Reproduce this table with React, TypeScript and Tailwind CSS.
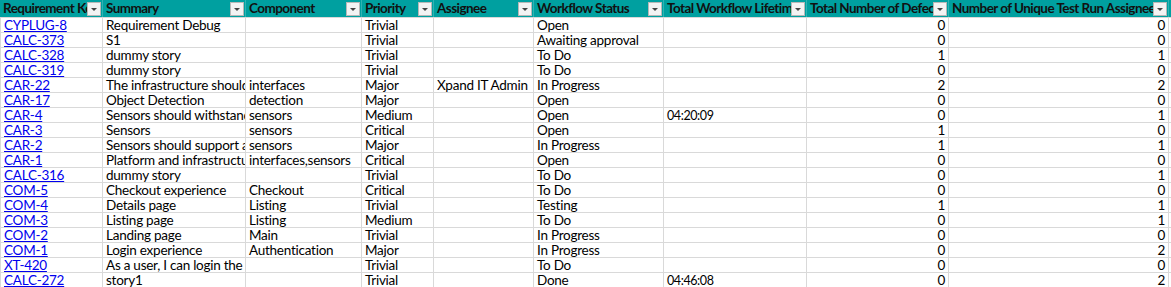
const columns = [
  { name: "Requirement Key", w: 103 },
  { name: "Summary", w: 143 },
  { name: "Component", w: 116 },
  { name: "Priority", w: 72 },
  { name: "Assignee", w: 100 },
  { name: "Workflow Status", w: 130 },
  { name: "Total Workflow Lifetime", w: 143 },
  { name: "Total Number of Defects", w: 142 },
  { name: "Number of Unique Test Run Assignees", w: 220 },
  { name: "Total", w: 60 },
];

const rows: string[][] = [
  ["CYPLUG-8", "Requirement Debug", "", "Trivial", "", "Open", "", "0", "0"],
  ["CALC-373", "S1", "", "Trivial", "", "Awaiting approval", "", "0", "0"],
  ["CALC-328", "dummy story", "", "Trivial", "", "To Do", "", "1", "1"],
  ["CALC-319", "dummy story", "", "Trivial", "", "To Do", "", "0", "0"],
  ["CAR-22", "The infrastructure should support", "interfaces", "Major", "Xpand IT Admin", "In Progress", "", "2", "2"],
  ["CAR-17", "Object Detection", "detection", "Major", "", "Open", "", "0", "0"],
  ["CAR-4", "Sensors should withstand", "sensors", "Medium", "", "Open", "04:20:09", "0", "1"],
  ["CAR-3", "Sensors", "sensors", "Critical", "", "Open", "", "1", "0"],
  ["CAR-2", "Sensors should support a", "sensors", "Major", "", "In Progress", "", "1", "1"],
  ["CAR-1", "Platform and infrastructure", "interfaces,sensors", "Critical", "", "Open", "", "0", "0"],
  ["CALC-316", "dummy story", "", "Trivial", "", "To Do", "", "0", "1"],
  ["COM-5", "Checkout experience", "Checkout", "Critical", "", "To Do", "", "0", "0"],
  ["COM-4", "Details page", "Listing", "Trivial", "", "Testing", "", "1", "1"],
  ["COM-3", "Listing page", "Listing", "Medium", "", "To Do", "", "0", "1"],
  ["COM-2", "Landing page", "Main", "Trivial", "", "In Progress", "", "0", "0"],
  ["COM-1", "Login experience", "Authentication", "Major", "", "In Progress", "", "0", "2"],
  ["XT-420", "As a user, I can login the app", "", "Trivial", "", "To Do", "", "0", "0"],
  ["CALC-272", "story1", "", "Trivial", "", "Done", "04:46:08", "0", "2"],
];

function FilterButton() {
  return (
    <div className="absolute right-[1px] top-[2px] flex h-[14px] w-[14px] items-center justify-center border border-[#b8b8b8] bg-[#f3f3f3]">
      <div className="mt-[1px] h-0 w-0 border-x-[3px] border-t-[3px] border-x-transparent border-t-[#444]" />
    </div>
  );
}

export default function App() {
  return (
    <div className="h-[287px] w-[1171px] overflow-hidden bg-white font-['Lato','Liberation_Sans',sans-serif] text-[13.5px] tracking-[-0.25px] text-black">
      <div className="flex h-[17px] w-max bg-[#00a0a0]">
        {columns.map((c) => (
          <div
            key={c.name}
            style={{ width: c.w }}
            className="relative shrink-0 overflow-hidden whitespace-nowrap border-r border-[#2fb3b3] pl-[3px] text-[13.5px] font-bold leading-[16px] tracking-[-0.55px] text-[#111]"
          >
            {c.name}
            <FilterButton />
          </div>
        ))}
      </div>
      {rows.map((r) => (
        <div key={r[0]} className="flex h-[15px] w-max border-t border-[#d9d9d9] first:border-t-0">
          {columns.map((c, i) => {
            const v = r[i] ?? "";
            const num = i === 7 || i === 8;
            return (
              <div
                key={c.name}
                style={{ width: c.w }}
                className={
                  "shrink-0 overflow-hidden whitespace-nowrap border-r border-[#d9d9d9] leading-[14px] " +
                  (num ? "pr-[3px] text-right" : "pl-[3px]") +
                  (i === 0 ? " border-l" : "")
                }
              >
                {i === 0 ? (
                  <span className="text-[#0000ee] underline">{v}</span>
                ) : i === 6 ? (
                  <span className="text-[12.5px] tracking-[-0.4px]">{v}</span>
                ) : (
                  v
                )}
              </div>
            );
          })}
        </div>
      ))}
    </div>
  );
}
